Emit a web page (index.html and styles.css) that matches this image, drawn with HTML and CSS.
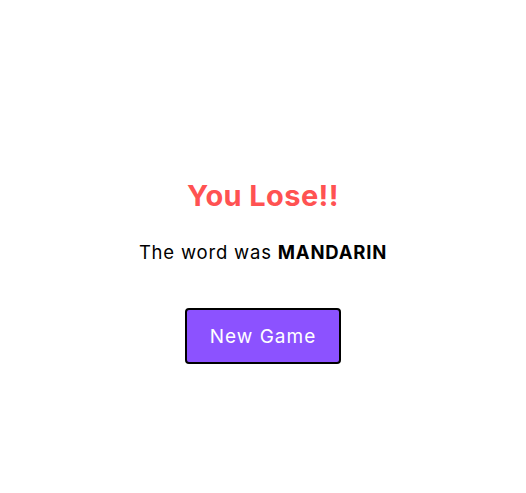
FILE: index.html
```html
<!DOCTYPE html>
<html>
<head>
<meta charset="utf-8">
<link rel="stylesheet" href="styles.css">
</head>
<body>
<main class="screen">
  <h1 class="title">You Lose!!</h1>
  <p class="message">The word was <strong>MANDARIN</strong></p>
  <button class="new-game">New Game</button>
</main>
</body>
</html>
```

FILE: styles.css
```css
html, body {
  margin: 0;
  padding: 0;
  background: #ffffff;
}
body {
  font-family: "Inter", "Open Sans", sans-serif;
  color: #000000;
}
.screen {
  height: 493px;
  display: flex;
  flex-direction: column;
  align-items: center;
  justify-content: flex-start;
  padding-top: 176px;
  box-sizing: border-box;
}
.title {
  margin: 0;
  font-size: 29px;
  font-weight: 700;
  color: #ff5252;
  line-height: 40px;
  letter-spacing: 0.4px;
}
.message {
  margin: 23px 0 0 0;
  font-size: 18.5px;
  line-height: 26px;
  letter-spacing: 0.8px;
}
.message strong {
  font-weight: 700;
}
.new-game {
  margin-top: 43px;
  width: 156px;
  height: 56px;
  background: #8c52ff;
  color: #ffffff;
  border: 2px solid #000000;
  border-radius: 4px;
  font-family: inherit;
  font-size: 19px;
  letter-spacing: 1px;
  padding: 0;
  cursor: pointer;
}
```
